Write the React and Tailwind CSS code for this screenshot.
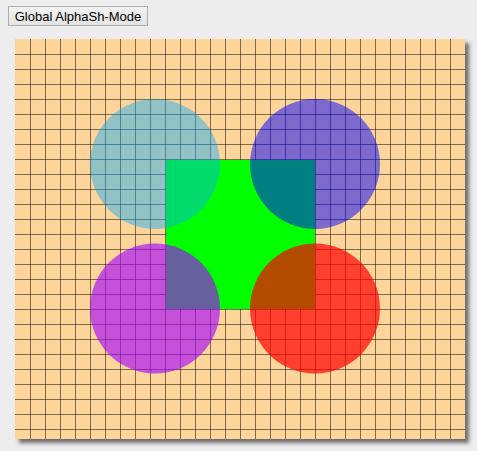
export default function App() {
  const vLines = Array.from({ length: 29 }, (_, i) => (i + 1) * 15);
  const hLines = Array.from({ length: 26 }, (_, i) => (i + 1) * 15);
  return (
    <div className="min-h-[451px] w-[477px] bg-[#ededed] pl-[8px] pt-[6px]" style={{ fontFamily: '"Liberation Sans", Arial, sans-serif' }}>
      <button className="flex h-[20px] w-[140px] items-center justify-center border border-[#adadad] bg-gradient-to-b from-[#f2f2f2] to-[#e4e4e4] text-[13px] leading-none text-black">
        Global AlphaSh-Mode
      </button>
      <div className="ml-[7px] mt-[13px] h-[400px] w-[450px] shadow-[4px_4px_4px_rgba(0,0,0,0.55)]">
        <svg width="450" height="400" viewBox="0 0 450 400" className="block">
          <rect x="0" y="0" width="450" height="400" fill="#fdd59b" />
          {vLines.map((x) => (
            <rect key={"v" + x} x={x} y="0" width="1" height="400" fill="rgba(0,0,0,0.5)" />
          ))}
          {hLines.map((y) => (
            <rect key={"h" + y} x="0" y={y} width="450" height="1" fill="rgba(0,0,0,0.5)" />
          ))}
          <rect x="151" y="121" width="149" height="149" fill="#00ff00" />
          <circle cx="140" cy="125" r="65" fill="rgb(0,170,255)" fillOpacity="0.42" />
          <circle cx="300" cy="125" r="65" fill="rgb(0,0,255)" fillOpacity="0.5" />
          <circle cx="140" cy="269.5" r="65" fill="rgb(165,0,255)" fillOpacity="0.62" />
          <circle cx="300" cy="269.5" r="65" fill="rgb(255,0,0)" fillOpacity="0.7" />
        </svg>
      </div>
    </div>
  );
}
